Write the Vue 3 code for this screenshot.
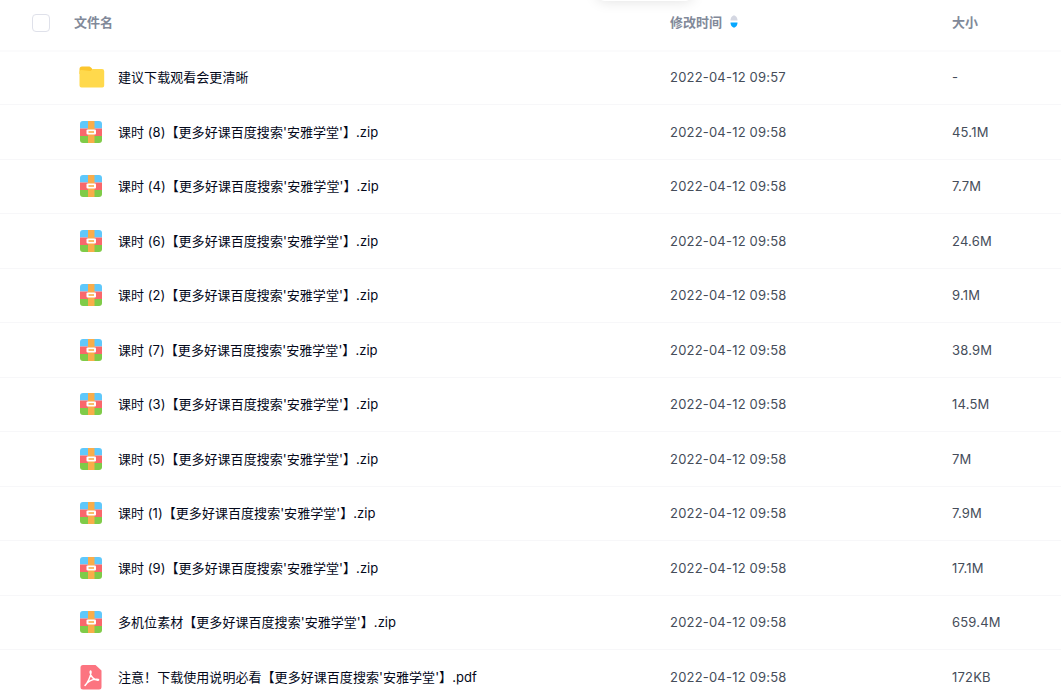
<script setup>
const tag = "【更多好课百度搜索'安雅学堂'】"
const t = '2022-04-12 09:58'
const rows = [
  { name: '建议下载观看会更清晰', time: '2022-04-12 09:57', size: '-', type: 'folder' },
  { name: `课时 (8)${tag}.zip`, time: t, size: '45.1M', type: 'zip' },
  { name: `课时 (4)${tag}.zip`, time: t, size: '7.7M', type: 'zip' },
  { name: `课时 (6)${tag}.zip`, time: t, size: '24.6M', type: 'zip' },
  { name: `课时 (2)${tag}.zip`, time: t, size: '9.1M', type: 'zip' },
  { name: `课时 (7)${tag}.zip`, time: t, size: '38.9M', type: 'zip' },
  { name: `课时 (3)${tag}.zip`, time: t, size: '14.5M', type: 'zip' },
  { name: `课时 (5)${tag}.zip`, time: t, size: '7M', type: 'zip' },
  { name: `课时 (1)${tag}.zip`, time: t, size: '7.9M', type: 'zip' },
  { name: `课时 (9)${tag}.zip`, time: t, size: '17.1M', type: 'zip' },
  { name: `多机位素材${tag}.zip`, time: t, size: '659.4M', type: 'zip' },
  { name: `注意！下载使用说明必看${tag}.pdf`, time: t, size: '172KB', type: 'pdf' }
]
</script>

<template>
  <div class="page">
    <div class="popup"></div>
    <div class="head">
      <div class="check-cell"><span class="check"></span></div>
      <div class="head-name">文件名</div>
      <div class="head-time">
        修改时间
        <svg class="sort" width="8" height="13" viewBox="0 0 8 13">
          <path d="M0.5 5.5C0.5 3 2 0.5 4 0.5S7.5 3 7.5 5.5Z" fill="#d4d7e2" />
          <path d="M0.5 7.5C0.5 10 2 12.5 4 12.5S7.5 10 7.5 7.5Z" fill="#06a7ff" />
        </svg>
      </div>
      <div class="head-size">大小</div>
    </div>
    <div v-for="(row, i) in rows" :key="i" class="row">
      <div class="icon-cell">
        <svg v-if="row.type === 'folder'" class="folder" width="26" height="22" viewBox="0 0 26 22">
          <path d="M0.500 3A2.500 2.500 0 0 1 3 0.500H9.500c1.500 0 2.200.6 3.200 1.800L14 4V8H0.500Z" fill="#fcc62d" />
          <path d="M0.500 6A2 2 0 0 1 2.500 4L11.500 5 14 3.100H23A2.200 2.200 0 0 1 25.200 5.300V19.500A2 2 0 0 1 23 21.500H2.500A2 2 0 0 1 0.500 19.500Z" fill="#ffd94c" />
        </svg>
        <svg v-else-if="row.type === 'zip'" class="zip" width="22" height="22" viewBox="0 0 22 22">
          <defs>
            <clipPath id="zipClip"><rect x="0" y="0" width="22" height="22" rx="3" /></clipPath>
          </defs>
          <g clip-path="url(#zipClip)">
            <rect width="22" height="7.500" fill="#5fc8fb" />
            <rect y="7.500" width="22" height="7.500" fill="#f9676b" />
            <rect y="15" width="22" height="7" fill="#7fcb48" />
            <rect x="8" width="6.500" height="22" fill="#f9ad4a" />
          </g>
          <rect x="6.500" y="8.500" width="9.500" height="5" rx="1" fill="#fff" />
          <rect x="8.500" y="10.200" width="5.500" height="1.600" fill="#f9ad4a" />
        </svg>
        <svg v-else class="pdf" width="22" height="26" viewBox="0 0 22 26">
          <path d="M3 1H15.500L21.500 6.500V23A2.500 2.500 0 0 1 19 25.500H3A2.500 2.500 0 0 1 .5 23V3.500A2.500 2.500 0 0 1 3 1Z" fill="#fc7480" />
          <path d="M5 21.500C7.500 19 10.500 13 11 8.500C11.200 6.500 10 6.500 10.200 8.500C10.500 12.500 14 16 18 16.300C19 16.200 18.700 15.200 17.500 15.200C13 15 8 17 5 21.500Z" fill="none" stroke="#fff" stroke-width="1.500" stroke-linejoin="round" />
        </svg>
      </div>
      <div class="name">{{ row.name }}</div>
      <div class="time">{{ row.time }}</div>
      <div class="size">{{ row.size }}</div>
    </div>
  </div>
</template>

<style scoped>
.page {
  position: relative;
  width: 1061px;
  height: 697px;
  overflow: hidden;
  background: #fff;
  font-family: Inter, "Noto Sans CJK SC", sans-serif;
}
.popup {
  position: absolute;
  left: 597px;
  top: -12px;
  width: 96px;
  height: 13px;
  background: #fff;
  border-radius: 0 0 8px 8px;
  box-shadow: 0 0 14px rgba(0, 0, 0, 0.13);
}
.head,
.row {
  display: grid;
  grid-template-columns: 74px 596px 282px 1fr;
  align-items: center;
  box-sizing: border-box;
  border-bottom: 1px solid #f7f7f9;
}
.row {
  grid-template-columns: 118px 552px 282px 1fr;
  height: 54.5px;
}
.head {
  height: 46px;
  margin-bottom: 4.5px;
  border-bottom: 0;
  box-shadow: 0 4.5px 0 #fff, 0 5.5px 0 #f7f7f9;
  color: #818999;
  font-size: 13px;
  font-weight: 600;
  line-height: 18px;
}
.head-name,
.head-time,
.head-size {
  margin-top: -3px;
}
.check-cell {
  padding-left: 32px;
  display: flex;
}
.check {
  width: 18px;
  height: 18px;
  box-sizing: border-box;
  border: 1px solid #dfe1ea;
  border-radius: 4px;
}
.head-time {
  display: flex;
  align-items: center;
  gap: 8px;
}
.icon-cell {
  display: flex;
  justify-content: flex-start;
  align-items: center;
}
.folder {
  margin-left: 78.5px;
}
.zip,
.pdf {
  margin-left: 80px;
}
.name {
  font-size: 13px;
  line-height: 16px;
  letter-spacing: 0.05px;
  color: #03081a;
  white-space: nowrap;
}
.time,
.size {
  font-size: 13px;
  line-height: 16px;
  letter-spacing: 0.2px;
  color: #454d5a;
  white-space: nowrap;
}
</style>
<style>
html, body { margin: 0; background: #fff; }
</style>
